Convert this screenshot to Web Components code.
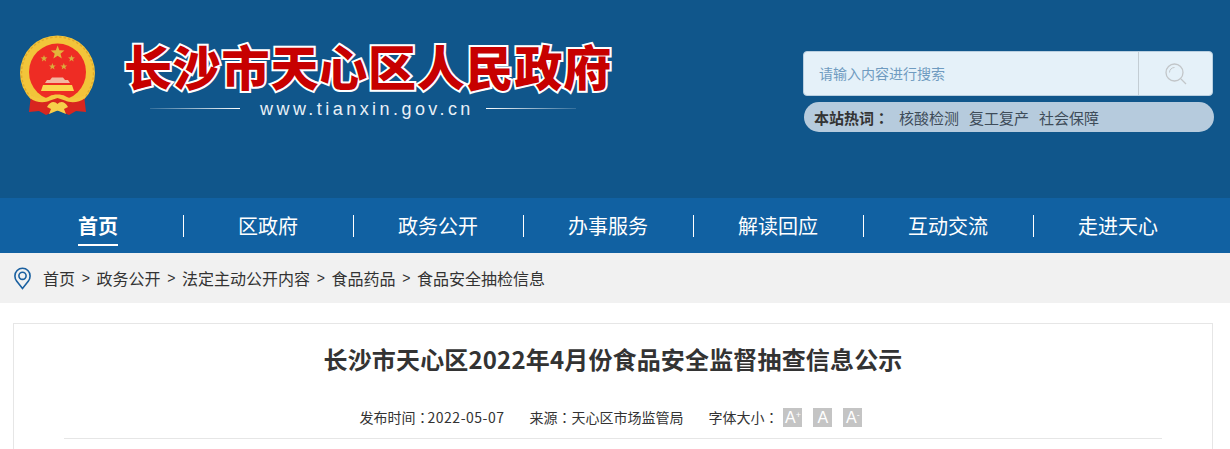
<!DOCTYPE html>
<html lang="zh">
<head>
<meta charset="utf-8">
<title>长沙市天心区2022年4月份食品安全监督抽查信息公示</title>
<style>
html, body {
    margin: 0;
    height: 449px;
    overflow: hidden;
    background: #fff;
    font-family: "Liberation Sans", "Noto Sans CJK SC", sans-serif;
}
</style>
</head>
<body>
<site-header></site-header>
<site-nav></site-nav>
<bread-crumb></bread-crumb>
<article-head></article-head>

<script>
const CJK = `"Noto Sans CJK SC", sans-serif`;
// centred full-width colon, the SC face sets it in the lower left corner
const COLON = `<span lang="zh-Hant" style="font-family:'Noto Sans CJK TC',sans-serif">：</span>`;

function star(cx, cy, r, fill) {
    let d = "";
    for (let i = 0; i < 10; i++) {
        const len = i % 2 ? r * 0.42 : r;
        const a = -Math.PI / 2 + i * Math.PI / 5;
        d += (i ? "L" : "M") + (cx + len * Math.cos(a)).toFixed(2) + " " + (cy + len * Math.sin(a)).toFixed(2);
    }
    return `<path d="${d}Z" fill="${fill}"/>`;
}

class SiteEmblem extends HTMLElement {
    constructor() {
        super();
        this.sr = this.attachShadow({ mode: "open" });
    }

    connectedCallback() {
        this.sr.innerHTML = `<style>
:host { display: block; width: 78px; height: 82px; }
svg { display: block; }
</style>
<svg width="78" height="82" viewBox="0 0 78 82">
    <circle cx="38.5" cy="38" r="37.5" fill="#f2c53a"/>
    <circle cx="38.5" cy="38" r="36" fill="none" stroke="#e2a92c" stroke-width="1.4" stroke-dasharray="2.5 2"/>
    <circle cx="38.5" cy="37" r="28.5" fill="#ee2c24"/>
    ${star(38.6, 17.8, 7.2, "#e2b63c")}
    ${star(25, 23.5, 3.6, "#d9ad3c")}
    ${star(52.5, 23.5, 3.6, "#d9ad3c")}
    ${star(33.4, 31.6, 3.6, "#d9ad3c")}
    ${star(44.8, 31.6, 3.6, "#d9ad3c")}
    <path d="M33 42.5 H44 L46 45 H49 L51 48 H26 L28 45 H31 Z" fill="#f3b7a0"/>
    <path d="M24 50 H53 L55 56 H22 Z" fill="#fbd64f"/>
    <path d="M12 60 L10 77 L20 76 L27 80 L38.5 75 L50 80 L57 76 L67 77 L65 60 C58 66 50 66 45 63 H32 C27 66 19 66 12 60 Z" fill="#d8261f"/>
    <path d="M10 58 C16 64 25 65 31 61 C34 59 43 59 46 61 C52 65 61 64 67 58 L66 63 C60 68 51 68 46 65.5 L38.5 63 L31 65.5 C26 68 17 68 11 63 Z" fill="#f4c83f"/>
    <path d="M28 72 C31 66 36 66 38.5 69 C41 66 46 66 49 72 L45 74 L47 79 L38.5 75.5 L30 79 L32 74 Z" fill="#f6cf4a"/>
</svg>`;
    }
}
customElements.define("site-emblem", SiteEmblem);

class SiteLogo extends HTMLElement {
    constructor() {
        super();
        this.sr = this.attachShadow({ mode: "open" });
    }

    connectedCallback() {
        this.sr.innerHTML = `<style>
:host {
    display: flex;
    flex-direction: column;
    width: 510px;
}
h1 {
    margin: 0;
    height: 58px;
    font: 900 48px/58px ${CJK};
    letter-spacing: .8px;
    white-space: nowrap;
    color: #c70000;
    -webkit-text-stroke: 4px #fff;
    paint-order: stroke fill;
}
.url {
    display: flex;
    align-items: center;
    margin-top: 1px;
    height: 26px;
}
.line {
    width: 90px;
    height: 1px;
    margin-left: 26px;
    background: linear-gradient(to right, rgba(255,255,255,.15), #fff);
}
.line.end {
    margin-left: 12px;
    background: linear-gradient(to left, rgba(255,255,255,.15), #fff);
}
.text {
    margin-left: 20px;
    padding-top: 2px;
    font: 18px/26px "Liberation Sans", Arial, sans-serif;
    letter-spacing: 3.45px;
    color: #e8f0f7;
    white-space: nowrap;
}
</style>
<h1>长沙市天心区人民政府</h1>
<div class="url"><span class="line"></span><span class="text">www.tianxin.gov.cn</span><span class="line end"></span></div>`;
    }
}
customElements.define("site-logo", SiteLogo);

class SiteSearch extends HTMLElement {
    constructor() {
        super();
        this.sr = this.attachShadow({ mode: "open" });
    }

    connectedCallback() {
        this.sr.innerHTML = `<style>
:host {
    display: flex;
    flex-direction: column;
    gap: 6px;
    width: 411px;
    font-family: ${CJK};
}
.box {
    display: flex;
    width: 410px;
    height: 45px;
    box-sizing: border-box;
    border: 1px solid #b9cfe0;
    border-radius: 4px;
    background: #e5f1f9;
}
.hint {
    flex: 1;
    padding-left: 15px;
    font-size: 14px;
    line-height: 43px;
    color: #6f9bc0;
    border-right: 1px solid #c3cdd4;
}
.btn {
    width: 73px;
    display: flex;
    align-items: center;
    justify-content: center;
}
.hot {
    display: flex;
    align-items: center;
    height: 30px;
    margin-left: 1px;
    padding-left: 10px;
    border-radius: 15px;
    background: #b6cbdd;
    font-size: 15px;
    color: #3e4c59;
}
.hot b { width: 85px; color: #333; }
.hot span.w { margin-right: 10px; }
</style>
<div class="box">
    <div class="hint">请输入内容进行搜索</div>
    <div class="btn">
        <svg width="22" height="22" viewBox="0 0 22 22" fill="none" stroke="#c2c6c9">
            <circle cx="9.5" cy="9.5" r="8.5" stroke-width="1.3"/>
            <path d="M4.5 9.5 A5 5 0 0 1 9.5 4.5" stroke-width="1"/>
            <path d="M16 16 L21 21" stroke-width="1.3"/>
        </svg>
    </div>
</div>
<div class="hot"><b>本站热词${COLON}</b><span class="w">核酸检测</span><span class="w">复工复产</span><span class="w">社会保障</span></div>`;
    }
}
customElements.define("site-search", SiteSearch);

class SiteHeader extends HTMLElement {
    constructor() {
        super();
        this.sr = this.attachShadow({ mode: "open" });
    }

    connectedCallback() {
        this.sr.innerHTML = `<style>
:host {
    display: flex;
    justify-content: space-between;
    height: 198px;
    box-sizing: border-box;
    background: #10568b;
}
.brand {
    display: flex;
    gap: 27px;
    padding: 35px 0 0 19px;
    height: 110px;
}
.brand site-logo { margin-top: 1px; }
site-search { margin: 51px 16px 0 0; }
</style>
<div class="brand"><site-emblem></site-emblem><site-logo></site-logo></div>
<site-search></site-search>`;
    }
}
customElements.define("site-header", SiteHeader);

class SiteNav extends HTMLElement {
    constructor() {
        super();
        this.sr = this.attachShadow({ mode: "open" });
    }

    connectedCallback() {
        const links = ["首页", "区政府", "政务公开", "办事服务", "解读回应", "互动交流", "走进天心"];
        this.sr.innerHTML = `<style>
:host {
    display: flex;
    height: 55px;
    padding-left: 13px;
    background: #1161a2;
    font-family: ${CJK};
    box-sizing: border-box;
}
.item {
    position: relative;
    display: flex;
    justify-content: center;
    width: 170px;
    padding-top: 14px;
    box-sizing: border-box;
}
.item:not(:last-child)::after {
    content: "";
    position: absolute;
    right: -1px;
    top: 17px;
    width: 1px;
    height: 22px;
    background: #fff;
}
a {
    display: block;
    height: 32px;
    font-size: 20px;
    line-height: 28px;
    color: #fff;
    text-decoration: none;
}
a.on {
    font-weight: 700;
    border-bottom: 2px solid #fff;
}
</style>` + links.map((t, i) => `<div class="item"><a href="#" class="${i === 0 ? "on" : ""}">${t}</a></div>`).join("");
    }
}
customElements.define("site-nav", SiteNav);

class BreadCrumb extends HTMLElement {
    constructor() {
        super();
        this.sr = this.attachShadow({ mode: "open" });
    }

    connectedCallback() {
        const trail = ["首页", "政务公开", "法定主动公开内容", "食品药品", "食品安全抽检信息"];
        this.sr.innerHTML = `<style>
:host {
    display: flex;
    align-items: center;
    height: 50px;
    padding-left: 14px;
    background: #f1f1f1;
    font-family: ${CJK};
    font-size: 16px;
    color: #333;
}
svg { margin-right: 12px; flex: none; }
i {
    width: 21.5px;
    text-align: center;
    font: 14px "Liberation Sans", sans-serif;
}
</style>
<svg width="17" height="23" viewBox="0 0 17 23" fill="none" stroke="#1a60a0" stroke-width="1.6">
    <path d="M8.5 21.5 L3 14.6 C1.6 13 .9 11 .9 8.9 A7.6 7.6 0 0 1 16.1 8.9 C16.1 11 15.4 13 14 14.6 Z"/>
    <circle cx="8.5" cy="8.8" r="3.6"/>
</svg>` + trail.map(t => `<span>${t}</span>`).join("<i>&gt;</i>");
    }
}
customElements.define("bread-crumb", BreadCrumb);

class ArticleHead extends HTMLElement {
    constructor() {
        super();
        this.sr = this.attachShadow({ mode: "open" });
    }

    connectedCallback() {
        this.sr.innerHTML = `<style>
:host {
    display: block;
    width: 1200px;
    height: 126px;
    box-sizing: border-box;
    margin: 20px 0 0 13px;
    padding: 0 50px;
    border: 1px solid #e6e6e6;
    border-bottom: 0;
    background: #fff;
    font-family: ${CJK};
}
h2 {
    margin: 0;
    padding-top: 17px;
    font-size: 24px;
    line-height: 36px;
    letter-spacing: .16px;
    font-weight: 700;
    text-align: center;
    color: #333;
}
.meta {
    display: flex;
    justify-content: center;
    align-items: center;
    gap: 25px;
    height: 24px;
    margin-top: 28px;
    padding: 0 4px 9px 0;
    border-bottom: 1px solid #e6e6e6;
    font-size: 14px;
    color: #333;
}
.date { letter-spacing: .5px; margin-left: -2px; }
.size { display: flex; align-items: center; }
.size span.a {
    display: inline-block;
    width: 19px;
    height: 19px;
    margin-right: 11px;
    background: #c4c4c4;
    color: #fff;
    font: 16px/20px "Liberation Sans", sans-serif;
    text-align: center;
}
.size span.a:last-child { margin-right: 0; }
.size label { margin-right: 5px; }
sup { font-size: 9px; line-height: 0; vertical-align: 5px; }
</style>
<h2>长沙市天心区2022年4月份食品安全监督抽查信息公示</h2>
<div class="meta">
    <div>发布时间${COLON}<span class="date">2022-05-07</span></div>
    <div>来源${COLON}天心区市场监管局</div>
    <div class="size"><label>字体大小${COLON}</label><span class="a">A<sup>+</sup></span><span class="a">A</span><span class="a">A<sup>-</sup></span></div>
</div>`;
    }
}
customElements.define("article-head", ArticleHead);
</script>
</body>
</html>
